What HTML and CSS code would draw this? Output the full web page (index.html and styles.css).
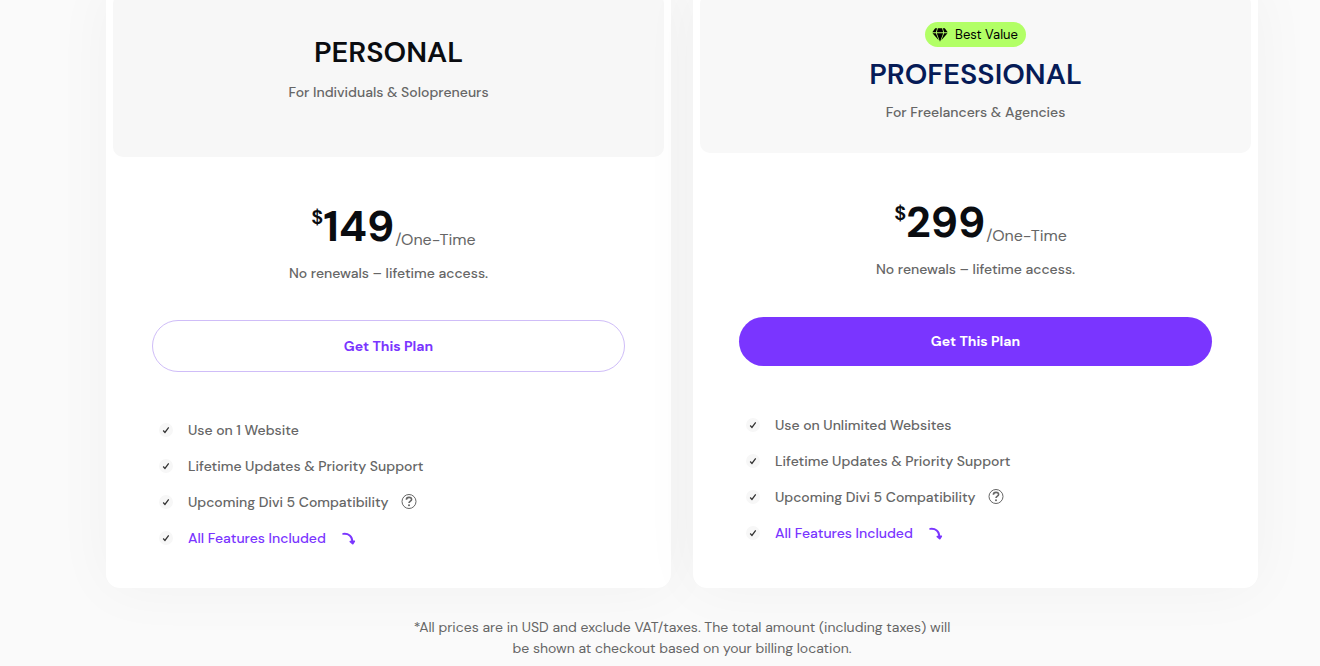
FILE: index.html
```html
<!DOCTYPE html>
<html lang="en">
<head>
<meta charset="utf-8">
<meta name="viewport" content="width=device-width, initial-scale=1">
<title>Pricing</title>
<link rel="stylesheet" href="styles.css">
</head>
<body>
<svg class="sprite" aria-hidden="true">
  <symbol id="check" viewBox="0 0 10 10"><path d="M1.500 5.600 3.700 8 8.400 1.800" fill="none" stroke="currentColor" stroke-width="1.600"/></symbol>
  <symbol id="help" viewBox="0 0 16 16"><circle cx="8" cy="7.500" r="7" fill="none" stroke="currentColor" stroke-width="1"/><path d="M5.400 5.800C5.400 4.200 6.500 3.400 8 3.400s2.600.8 2.600 2.200C10.600 7.200 8 7.200 8 9.100" fill="none" stroke="currentColor" stroke-width="1.600"/><circle cx="8" cy="11.300" r="1" fill="currentColor"/></symbol>
  <symbol id="arrow" viewBox="0 0 14 14"><path d="M1.200 2.900C6.500 2.300 10.200 5 10.400 10.500" fill="none" stroke="currentColor" stroke-width="1.900" stroke-linecap="round"/><path d="M8.300 10.600 10.700 12.700 12.300 10.200Z" fill="currentColor" stroke="currentColor" stroke-width="1.600" stroke-linejoin="round"/></symbol>
  <symbol id="gem" viewBox="0 0 16 14"><path d="M3.200.3 5.100.3 3.900 4.300H.3ZM5.900.3H10.100L11.200 4.300H4.800ZM10.900.3H12.800L15.700 4.300H12.100ZM.5 5.200H3.900L6.700 12.200ZM4.800 5.200H11.200L8 13.800ZM12.100 5.200H15.500L9.300 12.200Z" fill="currentColor"/></symbol>
</svg>
<main class="pricing">
  <div class="plans">
    <article class="plan">
      <header class="plan-head">
        <h2 class="plan-name">PERSONAL</h2>
        <p class="plan-for">For Individuals &amp; Solopreneurs</p>
      </header>
      <div class="plan-body">
        <p class="price"><span class="currency">$</span><span class="amount">149</span><span class="period">/One-Time</span></p>
        <p class="terms">No renewals – lifetime access.</p>
        <button class="buy" type="button">Get This Plan</button>
        <ul class="features">
          <li class="feature"><svg class="check"><use href="#check"/></svg>Use on 1 Website</li>
          <li class="feature"><svg class="check"><use href="#check"/></svg>Lifetime Updates &amp; Priority Support</li>
          <li class="feature"><svg class="check"><use href="#check"/></svg>Upcoming Divi 5 Compatibility<svg class="help"><use href="#help"/></svg></li>
          <li class="feature"><svg class="check"><use href="#check"/></svg><a class="all" href="#features">All Features Included<svg class="arrow"><use href="#arrow"/></svg></a></li>
        </ul>
      </div>
    </article>
    <article class="plan plan-pro">
      <header class="plan-head">
        <span class="badge"><svg class="gem"><use href="#gem"/></svg>Best Value</span>
        <h2 class="plan-name">PROFESSIONAL</h2>
        <p class="plan-for">For Freelancers &amp; Agencies</p>
      </header>
      <div class="plan-body">
        <p class="price"><span class="currency">$</span><span class="amount">299</span><span class="period">/One-Time</span></p>
        <p class="terms">No renewals – lifetime access.</p>
        <button class="buy" type="button">Get This Plan</button>
        <ul class="features">
          <li class="feature"><svg class="check"><use href="#check"/></svg>Use on Unlimited Websites</li>
          <li class="feature"><svg class="check"><use href="#check"/></svg>Lifetime Updates &amp; Priority Support</li>
          <li class="feature"><svg class="check"><use href="#check"/></svg>Upcoming Divi 5 Compatibility<svg class="help"><use href="#help"/></svg></li>
          <li class="feature"><svg class="check"><use href="#check"/></svg><a class="all" href="#features">All Features Included<svg class="arrow"><use href="#arrow"/></svg></a></li>
        </ul>
      </div>
    </article>
  </div>
  <p class="note">*All prices are in USD and exclude VAT/taxes. The total amount (including taxes) will be shown at checkout based on your billing location.</p>
</main>
</body>
</html>
```

FILE: styles.css
```css
* { box-sizing: border-box; }

body {
  margin: 0;
  background: #fafafa;
  color: #666;
  font: 500 14px/22px "DM Sans", Inter, "Liberation Sans", sans-serif;
  overflow: hidden;
}

h2, p, ul { margin: 0; padding: 0; }

.sprite { position: absolute; width: 0; height: 0; }

.pricing {
  margin-top: -13px;
  padding: 0 62px 0 106px;
}

.plans {
  display: grid;
  grid-template-columns: 1fr 1fr;
  gap: 22px;
}

.plan {
  padding: 7px 7px 32px;
  border-radius: 14px;
  background: #fff;
  box-shadow: 0 0 60px rgba(0, 0, 0, 0.04);
}

.plan-head {
  display: flex;
  flex-direction: column;
  align-items: center;
  padding: 40px 16px 54px;
  border-radius: 10px;
  background: #f7f7f7;
  text-align: center;
}

.plan-pro .plan-head { padding: 28px 16px 30px; background: #f8f8f8; }

.badge {
  display: flex;
  align-items: center;
  gap: 7px;
  margin-bottom: 9px;
  padding: 0 8px 0 7px;
  border-radius: 13px;
  background: #b2ff66;
  color: #000;
  font-size: 13px;
  font-weight: 400;
  line-height: 25px;
}

.gem { width: 16px; height: 14px; }

.plan-name {
  margin-bottom: 11px;
  color: #0a0c10;
  font-size: 29px;
  font-weight: 600;
  line-height: 36px;
}

.plan-pro .plan-name { margin-bottom: 9px; color: #061b57; }

.plan-body { padding: 44px 39px 0; }

.price {
  display: flex;
  justify-content: center;
  height: 50px;
  padding-left: 10px;
  color: #0a0c10;
}

.currency { font-size: 20px; font-weight: 600; line-height: 32px; }
.amount { font-size: 43px; font-weight: 700; line-height: 50px; }

.period {
  align-self: flex-end;
  margin-left: 1px;
  color: #666;
  font-size: 16px;
  font-weight: 400;
}

.terms { margin-top: 11px; text-align: center; }

.buy {
  display: block;
  width: 100%;
  height: 52px;
  margin: 36px 0 40px;
  border: 1px solid #cfbdf8;
  border-radius: 26px;
  background: #fff;
  color: #7a35ff;
  font: inherit;
  font-weight: 700;
  cursor: pointer;
}

.plan-pro .buy {
  height: 49px;
  margin: 37px 0 41px;
  padding-bottom: 3px;
  border: 0;
  background: #7a35ff;
  color: #fff;
}

.features { padding-left: 7px; list-style: none; }

.feature { display: flex; align-items: center; height: 36px; }

.check {
  width: 14px;
  height: 14px;
  margin-right: 15px;
  padding: 3px;
  border-radius: 50%;
  background: #f7f7f7;
  color: #333;
}

.help { width: 16px; height: 16px; margin-left: 12px; }

.all {
  display: flex;
  align-items: center;
  color: #7a35ff;
  text-decoration: none;
}

.arrow { width: 14px; height: 14px; margin-left: 16px; }

.note {
  max-width: 550px;
  margin: 29px auto 0;
  font-weight: 400;
  line-height: 21px;
  text-align: center;
}
```
